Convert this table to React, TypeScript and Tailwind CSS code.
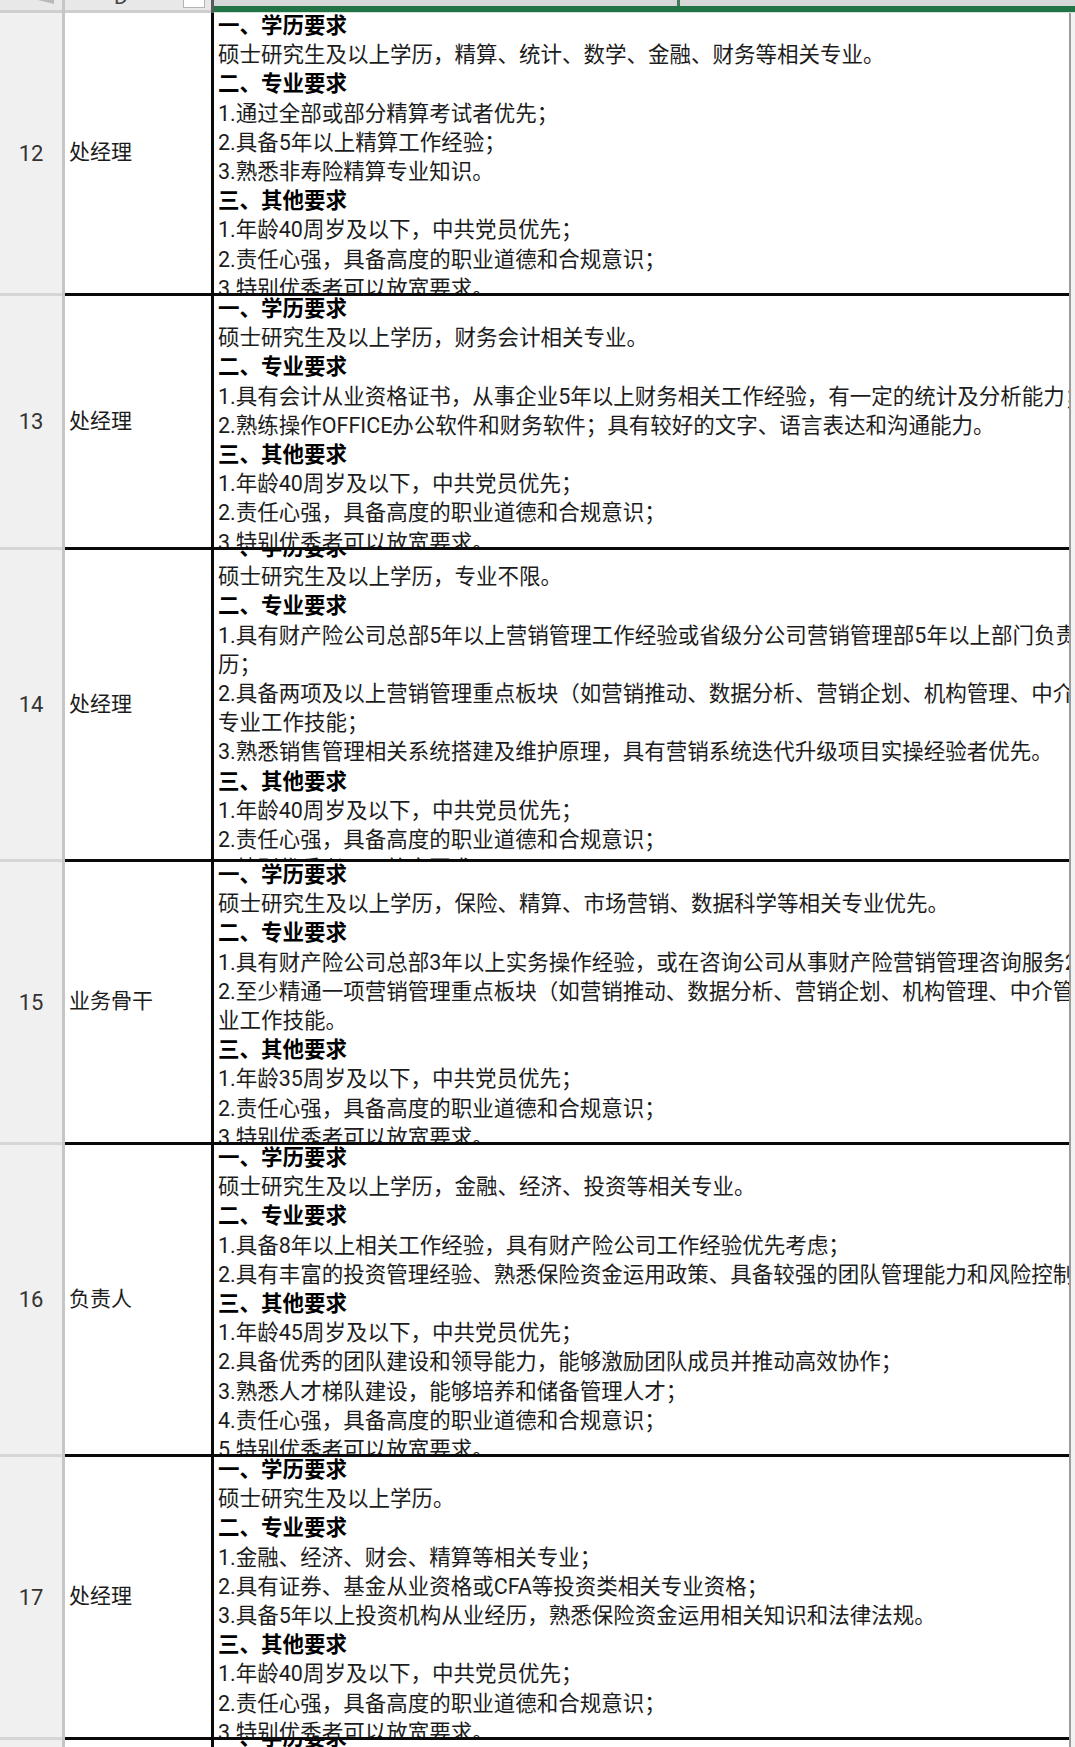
import React from "react";

type Row = {
  num: string;
  title: string;
  h: string;
  shift: string;
  lines: string[];
};

const rows: Row[] = [
  {
    num: "12",
    title: "处经理",
    h: "h-[280px]",
    shift: "mt-[-2px]",
    lines: [
      "一、学历要求",
      "硕士研究生及以上学历，精算、统计、数学、金融、财务等相关专业。",
      "二、专业要求",
      "1.通过全部或部分精算考试者优先；",
      "2.具备5年以上精算工作经验；",
      "3.熟悉非寿险精算专业知识。",
      "三、其他要求",
      "1.年龄40周岁及以下，中共党员优先；",
      "2.责任心强，具备高度的职业道德和合规意识；",
      "3.特别优秀者可以放宽要求。",
    ],
  },
  {
    num: "13",
    title: "处经理",
    h: "h-[251px]",
    shift: "mt-[-2px]",
    lines: [
      "一、学历要求",
      "硕士研究生及以上学历，财务会计相关专业。",
      "二、专业要求",
      "1.具有会计从业资格证书，从事企业5年以上财务相关工作经验，有一定的统计及分析能力；",
      "2.熟练操作OFFICE办公软件和财务软件；具有较好的文字、语言表达和沟通能力。",
      "三、其他要求",
      "1.年龄40周岁及以下，中共党员优先；",
      "2.责任心强，具备高度的职业道德和合规意识；",
      "3.特别优秀者可以放宽要求。",
    ],
  },
  {
    num: "14",
    title: "处经理",
    h: "h-[309px]",
    shift: "mt-[-17px]",
    lines: [
      "一、学历要求",
      "硕士研究生及以上学历，专业不限。",
      "二、专业要求",
      "1.具有财产险公司总部5年以上营销管理工作经验或省级分公司营销管理部5年以上部门负责人经",
      "历；",
      "2.具备两项及以上营销管理重点板块（如营销推动、数据分析、营销企划、机构管理、中介业务等）",
      "专业工作技能；",
      "3.熟悉销售管理相关系统搭建及维护原理，具有营销系统迭代升级项目实操经验者优先。",
      "三、其他要求",
      "1.年龄40周岁及以下，中共党员优先；",
      "2.责任心强，具备高度的职业道德和合规意识；",
      "3.特别优秀者可以放宽要求。",
    ],
  },
  {
    num: "15",
    title: "业务骨干",
    h: "h-[280px]",
    shift: "mt-[-2px]",
    lines: [
      "一、学历要求",
      "硕士研究生及以上学历，保险、精算、市场营销、数据科学等相关专业优先。",
      "二、专业要求",
      "1.具有财产险公司总部3年以上实务操作经验，或在咨询公司从事财产险营销管理咨询服务2年以上经验；",
      "2.至少精通一项营销管理重点板块（如营销推动、数据分析、营销企划、机构管理、中介管理等）专",
      "业工作技能。",
      "三、其他要求",
      "1.年龄35周岁及以下，中共党员优先；",
      "2.责任心强，具备高度的职业道德和合规意识；",
      "3.特别优秀者可以放宽要求。",
    ],
  },
  {
    num: "16",
    title: "负责人",
    h: "h-[309px]",
    shift: "mt-[-2px]",
    lines: [
      "一、学历要求",
      "硕士研究生及以上学历，金融、经济、投资等相关专业。",
      "二、专业要求",
      "1.具备8年以上相关工作经验，具有财产险公司工作经验优先考虑；",
      "2.具有丰富的投资管理经验、熟悉保险资金运用政策、具备较强的团队管理能力和风险控制能力；",
      "三、其他要求",
      "1.年龄45周岁及以下，中共党员优先；",
      "2.具备优秀的团队建设和领导能力，能够激励团队成员并推动高效协作；",
      "3.熟悉人才梯队建设，能够培养和储备管理人才；",
      "4.责任心强，具备高度的职业道德和合规意识；",
      "5.特别优秀者可以放宽要求。",
    ],
  },
  {
    num: "17",
    title: "处经理",
    h: "h-[280px]",
    shift: "mt-[-2px]",
    lines: [
      "一、学历要求",
      "硕士研究生及以上学历。",
      "二、专业要求",
      "1.金融、经济、财会、精算等相关专业；",
      "2.具有证券、基金从业资格或CFA等投资类相关专业资格；",
      "3.具备5年以上投资机构从业经历，熟悉保险资金运用相关知识和法律法规。",
      "三、其他要求",
      "1.年龄40周岁及以下，中共党员优先；",
      "2.责任心强，具备高度的职业道德和合规意识；",
      "3.特别优秀者可以放宽要求。",
    ],
  },
  {
    num: "18",
    title: "",
    h: "h-[40px]",
    shift: "mt-[-17px]",
    lines: ["一、学历要求", "硕士研究生及以上学历。"],
  },
];

const isHeading = (s: string) => /^[一二三]、/.test(s);

function Separator() {
  return (
    <div className="flex h-[3px] shrink-0">
      <div className="w-[62px] shrink-0 bg-[#d6d6d6]" />
      <div className="w-[3px] shrink-0 bg-[#c6c6c6]" />
      <div className="w-[1004px] shrink-0 bg-[#0a0a0a]" />
      <div className="w-[2px] shrink-0 bg-[#9c9c9c]" />
      <div className="flex-1 bg-[#f2f2f2]" />
    </div>
  );
}

function SheetRow({ row }: { row: Row }) {
  return (
    <div className={`flex shrink-0 ${row.h}`}>
      <div className="w-[62px] shrink-0 bg-[#f0f0f0] flex items-center justify-center text-[22px] text-[#333]">
        {row.num === "18" ? "" : row.num}
      </div>
      <div className="w-[3px] shrink-0 bg-[#c6c6c6]" />
      <div className="w-[146px] shrink-0 bg-white flex items-center pl-[4px] text-[21px] text-[#1c1c1c]">
        {row.title}
      </div>
      <div className="w-[3px] shrink-0 bg-[#0a0a0a]" />
      <div className="w-[855px] shrink-0 overflow-hidden bg-white pl-[4px]">
        <div className={`${row.shift} text-[21.5px] leading-[29.2px]`}>
          {row.lines.map((line, i) => (
            <div
              key={i}
              className={
                isHeading(line)
                  ? "whitespace-nowrap font-bold text-black"
                  : "whitespace-nowrap text-[#1c1c1c]"
              }
            >
              {line}
            </div>
          ))}
        </div>
      </div>
      <div className="w-[2px] shrink-0 bg-[#9c9c9c]" />
      <div className="flex-1 bg-[#f2f2f2]" />
    </div>
  );
}

function Header() {
  return (
    <div className="flex h-[13px] shrink-0">
      {/* corner */}
      <div className="w-[62px] shrink-0 flex flex-col">
        <div className="h-[10px] bg-[#e8e8e8] flex justify-end pr-[8px]">
          <svg width="16" height="4" viewBox="0 0 16 4">
            <path d="M0 0 L16 0 L16 4 Z" fill="#b9b9b9" />
          </svg>
        </div>
        <div className="h-[3px] bg-[#cfcfcf]" />
      </div>
      <div className="w-[3px] shrink-0 bg-[#c6c6c6]" />
      {/* column D header */}
      <div className="w-[146px] shrink-0 flex flex-col">
        <div className="h-[10px] bg-[#e8e8e8] flex overflow-hidden">
          <div className="pl-[49px] mt-[-13px] text-[21px] leading-[21px] text-[#444]">
            D
          </div>
          <div className="ml-auto mr-[6px] w-[22px] h-[8px] bg-white border border-t-0 border-[#b4b4b4]" />
        </div>
        <div className="h-[3px] bg-[#cfcfcf]" />
      </div>
      <div className="w-[3px] shrink-0 bg-[#5a5a5a]" />
      {/* column E header, selected */}
      <div className="w-[1004px] shrink-0 flex flex-col">
        <div className="h-[6px] bg-[#d6d8d7] flex">
          <div className="w-[463px]" />
          <div className="w-[3px] bg-[#3f7b57]" />
        </div>
        <div className="h-[6px] bg-[#217346]" />
        <div className="h-[1px] bg-[#cfe3d6]" />
      </div>
      <div className="w-[2px] shrink-0 bg-[#9c9c9c]" />
      <div className="flex-1 bg-[#f2f2f2]" />
    </div>
  );
}

export default function App() {
  return (
    <div className="w-[1075px] h-[1747px] overflow-hidden bg-white flex flex-col font-[family-name:Roboto,'Noto_Sans_CJK_SC',sans-serif]">
      <Header />
      {rows.map((row, i) => (
        <React.Fragment key={row.num}>
          <SheetRow row={row} />
          {i < rows.length - 1 && <Separator />}
        </React.Fragment>
      ))}
    </div>
  );
}
